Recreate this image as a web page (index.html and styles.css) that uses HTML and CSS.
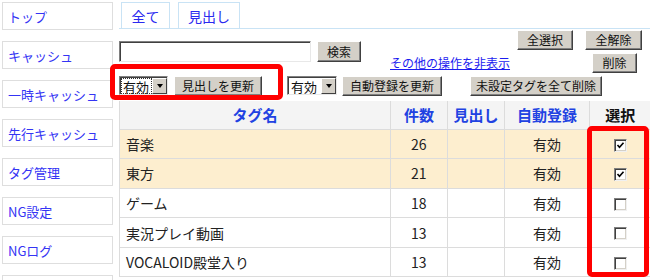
FILE: index.html
```html
<!DOCTYPE html>
<html lang="ja">
<head>
<meta charset="utf-8">
<link rel="stylesheet" href="styles.css">
</head>
<body>
<div class="page">
  <nav class="side">
    <a class="side-item">トップ</a>
    <a class="side-item">キャッシュ</a>
    <a class="side-item">一時キャッシュ</a>
    <a class="side-item">先行キャッシュ</a>
    <a class="side-item">タグ管理</a>
    <a class="side-item">NG設定</a>
    <a class="side-item">NGログ</a>
    <a class="side-item"></a>
  </nav>
  <main class="main">
    <div class="tabs">
      <span class="tab tab-all">全て</span>
      <span class="tab tab-head">見出し</span>
    </div>
    <div class="top">
      <div class="search">
        <span class="input"></span>
        <span class="btn btn-search">検索</span>
      </div>
      <a class="more">その他の操作を非表示</a>
      <div class="selbtns">
        <div class="selrow">
          <span class="btn btn-selall">全選択</span>
          <span class="btn btn-unsel">全解除</span>
        </div>
        <span class="btn btn-del">削除</span>
      </div>
    </div>
    <div class="actions">
      <span class="select"><span class="sel-text focus">有効</span><span class="sel-arrow"><span class="tri"></span></span></span>
      <span class="btn btn-upd1">見出しを更新</span>
      <span class="select select2"><span class="sel-text">有効</span><span class="sel-arrow"><span class="tri"></span></span></span>
      <span class="btn btn-upd2">自動登録を更新</span>
      <span class="btn btn-upd3">未設定タグを全て削除</span>
    </div>
    <table class="tags">
      <colgroup>
        <col class="c-name"><col class="c-num"><col class="c-head"><col class="c-auto"><col class="c-sel">
      </colgroup>
      <thead>
        <tr><th>タグ名</th><th>件数</th><th>見出し</th><th>自動登録</th><th class="th-sel">選択</th></tr>
      </thead>
      <tbody>
        <tr class="hl"><td class="name">音楽</td><td class="num">26</td><td></td><td class="auto">有効</td><td class="cbc"><span class="cb checked"><svg viewBox="0 0 9 9" width="9" height="9"><path d="M1.5 4 L3.5 6.3 L7.5 1.8" fill="none" stroke="#000" stroke-width="1.6"/></svg></span></td></tr>
        <tr class="hl"><td class="name">東方</td><td class="num">21</td><td></td><td class="auto">有効</td><td class="cbc"><span class="cb checked"><svg viewBox="0 0 9 9" width="9" height="9"><path d="M1.5 4 L3.5 6.3 L7.5 1.8" fill="none" stroke="#000" stroke-width="1.6"/></svg></span></td></tr>
        <tr><td class="name">ゲーム</td><td class="num">18</td><td></td><td class="auto">有効</td><td class="cbc"><span class="cb"></span></td></tr>
        <tr><td class="name">実況プレイ動画</td><td class="num">13</td><td></td><td class="auto">有効</td><td class="cbc"><span class="cb"></span></td></tr>
        <tr><td class="name">VOCALOID殿堂入り</td><td class="num">13</td><td></td><td class="auto">有効</td><td class="cbc"><span class="cb"></span></td></tr>
      </tbody>
    </table>
  </main>
  <div class="mark mark-1"></div>
  <div class="mark mark-2"></div>
</div>
</body>
</html>
```
FILE: styles.css
```css
* { box-sizing: border-box; }
html, body { margin: 0; padding: 0; background: #fff; }
body {
  font-family: "Noto Sans CJK JP", "Noto Sans", sans-serif;
  font-size: 13px;
  color: #222;
  width: 650px;
  height: 280px;
  overflow: hidden;
}
.page {
  position: relative;
  display: flex;
  gap: 6px;
  width: 650px;
  height: 280px;
}
.side {
  display: flex;
  flex-direction: column;
  gap: 11px;
  padding: 2px 0 0 2px;
  width: 113px;
  flex: none;
}
.side-item {
  display: flex;
  align-items: center;
  height: 28px;
  width: 111px;
  border: 1px solid #dedede;
  padding-left: 5px;
  color: #3434f4;
  font-size: 13px;
  line-height: 1;
  flex: none;
}
.main {
  flex: none;
  width: 531px;
}
.tabs {
  display: flex;
  gap: 8px;
  height: 29px;
  padding: 2px 0 0 2px;
  border-bottom: 1px solid #c9e3f5;
}
.tab {
  display: flex;
  align-items: center;
  justify-content: center;
  height: 26px;
  border: 1px solid #c9e3f5;
  border-bottom: none;
  color: #2a2af0;
  font-size: 14px;
  line-height: 1;
}
.tab-all { width: 49px; }
.tab-head { width: 62px; }

.top {
  display: flex;
  height: 45px;
}
.search {
  display: flex;
  gap: 6px;
  margin-top: 12px;
  height: 21px;
}
.input {
  display: block;
  width: 192px;
  height: 21px;
  background: #fff;
  border-top: 1px solid #808080;
  border-left: 1px solid #808080;
  border-right: 1px solid #e8e8e8;
  border-bottom: 1px solid #e8e8e8;
  box-shadow: inset 1px 1px 0 #404040;
}
.btn {
  display: flex;
  align-items: center;
  justify-content: center;
  height: 20px;
  background: #d4d0c8;
  border-top: 1px solid #fff;
  border-left: 1px solid #fff;
  border-right: 1px solid #404040;
  border-bottom: 1px solid #404040;
  box-shadow: inset -1px -1px 0 #808080;
  font-size: 12px;
  line-height: 1;
  color: #111;
  white-space: nowrap;
  flex: none;
}
.btn-search { width: 44px; height: 21px; }
.more {
  margin: 27px 0 0 29px;
  width: 127px;
  height: 13px;
  font-size: 12px;
  line-height: 13px;
  color: #1c1cf0;
  text-decoration: underline;
  white-space: nowrap;
}
.selbtns {
  display: flex;
  flex-direction: column;
  margin-top: 1px;
}
.selrow {
  display: flex;
  gap: 12px;
}
.btn-selall { width: 56px; }
.btn-unsel { width: 57px; }
.btn-del { width: 45px; margin: 3px 0 0 75px; }

.actions {
  display: flex;
  align-items: flex-start;
  height: 27px;
  padding-top: 2px;
}
.select {
  display: flex;
  align-items: stretch;
  width: 49px;
  height: 19px;
  background: #fff;
  border-top: 1px solid #808080;
  border-left: 1px solid #808080;
  border-right: 1px solid #e8e8e8;
  border-bottom: 1px solid #e8e8e8;
  box-shadow: inset 1px 1px 0 #404040;
  padding: 1px 0 0 1px;
  flex: none;
}
.sel-text {
  flex: 1;
  display: flex;
  align-items: center;
  padding-left: 2px;
  font-size: 13px;
  line-height: 1;
  color: #111;
}
.sel-text.focus { outline: 1px dotted #333; outline-offset: -1px; }
.sel-arrow {
  width: 15px;
  display: flex;
  align-items: center;
  justify-content: center;
  background: #d4d0c8;
  border-top: 1px solid #fff;
  border-left: 1px solid #fff;
  border-right: 1px solid #404040;
  border-bottom: 1px solid #404040;
}
.tri {
  width: 0;
  height: 0;
  border-left: 3.5px solid transparent;
  border-right: 3.5px solid transparent;
  border-top: 4px solid #000;
}
.btn-upd1 { width: 88px; margin-left: 6px; }
.select2 { width: 50px; margin-left: 25px; }
.btn-upd2 { width: 100px; margin-left: 5px; }
.btn-upd3 { width: 132px; margin-left: 28px; }

.tags {
  border-collapse: collapse;
  width: 531px;
  table-layout: fixed;
}
.c-name { width: 271px; }
.c-num { width: 57px; }
.c-head { width: 57px; }
.c-auto { width: 85px; }
.c-sel { width: 61px; }
.tags th, .tags td {
  border: 1px solid #dcdcdc;
  padding: 0;
}
.tags tr:first-child th { border-top: none; }
.tags th:first-child, .tags td:first-child { border-left: 1px solid #dcdcdc; }
.tags th:last-child, .tags td:last-child { border-right: none; }
.tags thead tr { height: 28px; }
.tags th {
  background: #f4f4f4;
  color: #2142e2;
  font-size: 15px;
  font-weight: bold;
  text-align: center;
  line-height: 1;
}
.tags th.th-sel { color: #111; }
.tags tbody tr { height: 29.6px; }
.tags tr.hl td { background: #fdeecf; }
.tags td {
  font-size: 14px;
  line-height: 1;
  color: #222;
}
.tags td.name { padding-left: 6px; }
.tags td.num { padding-left: 20px; }
.tags td.auto { text-align: center; }
.tags td.cbc { text-align: center; }
.cb {
  display: inline-flex;
  align-items: center;
  justify-content: center;
  width: 13px;
  height: 13px;
  vertical-align: middle;
  background: #fff;
  border-top: 1px solid #808080;
  border-left: 1px solid #808080;
  border-right: 1px solid #f0f0f0;
  border-bottom: 1px solid #f0f0f0;
  box-shadow: inset 1px 1px 0 #404040, inset -1px -1px 0 #d4d0c8;
}
.cb svg { display: block; }

.mark {
  position: absolute;
  border: 5px solid #ff0000;
  border-radius: 5px;
}
.mark-1 { left: 110px; top: 64px; width: 173px; height: 36px; }
.mark-2 { left: 587px; top: 126px; width: 62px; height: 151px; }
```
